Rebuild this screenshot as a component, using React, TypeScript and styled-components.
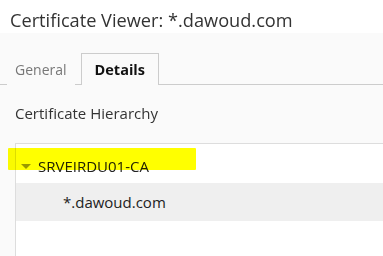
import styled, { createGlobalStyle } from "styled-components";

const GlobalStyle = createGlobalStyle`
  html, body {
    margin: 0;
    padding: 0;
    background: #fafafa;
    font-family: "Open Sans", "Noto Sans", sans-serif;
    overflow: hidden;
  }
`;

const Components = {
  Window: styled.div`
    width: 383px;
    height: 256px;
    display: flex;
    flex-direction: column;
    background: #fafafa;
    overflow: hidden;
  `,
  TitleBar: styled.div`
    height: 33px;
    flex: none;
    background: #ffffff;
    padding-left: 10px;
    display: flex;
    align-items: flex-end;
    font-size: 18.2px;
    line-height: 26px;
    color: #333333;
    white-space: nowrap;
  `,
  TabStrip: styled.div`
    height: 52px;
    flex: none;
    display: flex;
    align-items: flex-end;
    padding-left: 7px;
    border-bottom: 1px solid #cccccc;
    box-sizing: border-box;
  `,
  Tab: styled.div<{ $active?: boolean }>`
    height: 32px;
    box-sizing: border-box;
    display: flex;
    align-items: center;
    padding: 0 ${(p) => (p.$active ? "13px" : "7px")};
    font-size: ${(p) => (p.$active ? "14.5px" : "14px")};
    font-weight: ${(p) => (p.$active ? 700 : 400)};
    color: ${(p) => (p.$active ? "#111111" : "#777777")};
    background: #fafafa;
    border: 1px solid ${(p) => (p.$active ? "#cccccc" : "transparent")};
    border-bottom: none;
    margin-bottom: -1px;
    margin-right: 6px;
  `,
  Content: styled.div`
    flex: 1;
    display: flex;
    flex-direction: column;
    padding: 18px 0 0 15px;
  `,
  Label: styled.div`
    font-size: 15px;
    line-height: 20px;
    color: #333333;
  `,
  TreeBox: styled.div`
    flex: 1;
    margin-top: 20px;
    background: #ffffff;
    border-top: 1px solid #dddddd;
    border-left: 1px solid #dddddd;
    padding-top: 4px;
    position: relative;
  `,
  TreeRow: styled.div<{ $depth: number; $selected?: boolean }>`
    height: ${(p) => (p.$selected ? "38px" : "35px")};
    display: flex;
    align-items: center;
    padding-left: ${(p) => 5 + p.$depth * 42}px;
    background: ${(p) => (p.$selected ? "#efefef" : "transparent")};
    font-size: 15px;
    color: #222222;
    position: relative;
  `,
  Caret: styled.span`
    width: 0;
    height: 0;
    border-left: 5px solid transparent;
    border-right: 5px solid transparent;
    border-top: 5px solid #999999;
    margin-right: 7px;
    margin-top: 2px;
  `,
  Marker: styled.span`
    position: absolute;
    left: -8px;
    top: 0px;
    width: 188px;
    height: 22px;
    background: #ffff00;
    mix-blend-mode: multiply;
    border-radius: 1px;
  `,
};

export default function App() {
  return (
    <Components.Window>
      <GlobalStyle />
      <Components.TitleBar>Certificate Viewer: *.dawoud.com</Components.TitleBar>
      <Components.TabStrip>
        <Components.Tab>General</Components.Tab>
        <Components.Tab $active>Details</Components.Tab>
      </Components.TabStrip>
      <Components.Content>
        <Components.Label>Certificate Hierarchy</Components.Label>
        <Components.TreeBox>
          <Components.TreeRow $depth={0}>
            <Components.Caret />
            SRVEIRDU01-CA
            <Components.Marker />
          </Components.TreeRow>
          <Components.TreeRow $depth={1} $selected>
            *.dawoud.com
          </Components.TreeRow>
        </Components.TreeBox>
      </Components.Content>
    </Components.Window>
  );
}
